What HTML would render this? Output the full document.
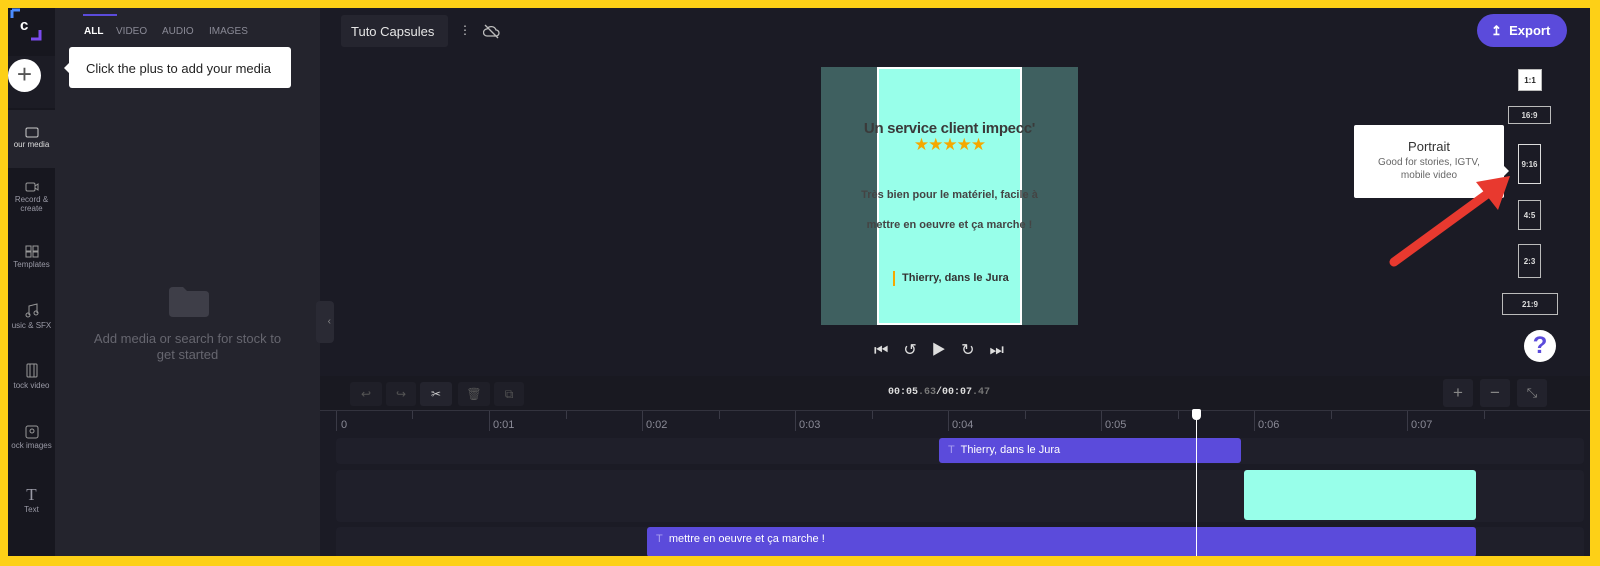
<!DOCTYPE html>
<html><head><meta charset="utf-8"><style>
*{margin:0;padding:0;box-sizing:border-box}
body{width:1600px;height:566px;background:#fdd017;font-family:"Liberation Sans",sans-serif;position:relative;overflow:hidden}
.a{position:absolute}
#app{left:8px;top:8px;width:1582px;height:548px;background:#1b1b25;overflow:hidden}
.nav{left:0;top:0;width:47px;height:548px;background:#17171f}
.navi{position:absolute;left:0;width:47px;text-align:center;color:#9a9aa6;font-size:8px;line-height:9px}
.panel{left:47px;top:0;width:265px;height:548px;background:#24242d}
.tab{position:absolute;top:18px;font-size:10px;color:#8a8a96}
.rb{position:absolute;border:1px solid #bbb;color:#ddd;font-size:8px;display:flex;align-items:center;justify-content:center;font-weight:bold}
.tick{position:absolute;top:0;width:1px;height:20px;background:#3a3a46}
.tl{position:absolute;top:8px;font-size:11px;color:#8a8a96}
.tk{position:absolute;border-radius:4px;background:#1f1f2a}
</style></head><body>
<div id="app" class="a">
 <div class="a nav">
  <div class="a" style="left:2px;top:0;width:34px;height:34px">
   <svg width="34" height="34"><path d="M2 2h8M2 2v8" stroke="#4b8cff" stroke-width="3" fill="none"/><path d="M30 22v9h-9" stroke="#7b4bef" stroke-width="3" fill="none"/><text x="10" y="22" font-size="15" font-weight="bold" fill="#fff" font-family="Liberation Sans">c</text></svg>
  </div>
  <div class="a" style="left:0;top:48px;width:47px;height:52px;background:#1c1c25"></div>
  <div class="a" style="left:0;top:51px;width:33px;height:33px;border-radius:50%;background:#fff;color:#555;font-size:26px;line-height:31px;text-align:center;font-weight:200">+</div>
  <div class="a" style="left:0;top:102px;width:47px;height:58px;background:#24242d"></div>
  <div class="navi" style="top:118px"><svg width="14" height="12"><rect x="1" y="2" width="12" height="9" rx="1.5" fill="none" stroke="#ccc"/></svg><br><span style="color:#ddd">our media</span></div>
  <div class="navi" style="top:173px"><svg width="14" height="12"><rect x="1" y="2" width="9" height="8" rx="1.5" fill="none" stroke="#999"/><path d="M10 5l3-2v6l-3-2" fill="none" stroke="#999"/></svg><br>Record &amp;<br>create</div>
  <div class="navi" style="top:236px"><svg width="14" height="14"><path d="M1 2h5v5H1zM1 8h5v5H1zM8 8h5v5H8zM8 2h5v5H8z" fill="none" stroke="#999"/></svg><br>Templates</div>
  <div class="navi" style="top:295px"><svg width="14" height="16"><path d="M4 12V3l8-2v9" fill="none" stroke="#999"/><circle cx="3" cy="12" r="2" fill="none" stroke="#999"/><circle cx="11" cy="10" r="2" fill="none" stroke="#999"/></svg><br>usic &amp; SFX</div>
  <div class="navi" style="top:355px"><svg width="14" height="16"><rect x="2" y="1" width="10" height="13" rx="1" fill="none" stroke="#999"/><path d="M5 1v13M9 1v13" stroke="#999"/></svg><br>tock video</div>
  <div class="navi" style="top:417px"><svg width="14" height="14"><rect x="1" y="1" width="12" height="12" rx="2" fill="none" stroke="#999"/><circle cx="7" cy="6" r="2" fill="none" stroke="#999"/></svg><br>ock images</div>
  <div class="navi" style="top:477px"><span style="font-family:'Liberation Serif';font-size:17px;line-height:20px">T</span><br>Text</div>
 </div>
 <div class="a panel">
  <div class="a" style="left:28px;top:6px;width:34px;height:2px;background:#5b4bdb"></div>
  <div class="tab" style="left:29px;color:#fff;font-weight:bold">ALL</div>
  <div class="tab" style="left:61px">VIDEO</div>
  <div class="tab" style="left:107px">AUDIO</div>
  <div class="tab" style="left:154px">IMAGES</div>
  <div class="a" style="left:14px;top:39px;width:222px;height:41px;background:#fff;border-radius:3px;font-size:13px;color:#222;padding:14px 0 0 17px">Click the plus to add your media</div>
  <div class="a" style="left:3px;top:54px;width:0;height:0;border:6px solid transparent;border-right-color:#fff"></div>
  <svg class="a" style="left:114px;top:279px" width="40" height="30"><path d="M0 4q0-4 4-4h10l4 4h18q4 0 4 4v18q0 4-4 4H4q-4 0-4-4z" fill="#3e3e48"/></svg>
  <div class="a" style="left:30px;top:323px;width:205px;text-align:center;color:#66666f;font-size:13px;line-height:16px">Add media or search for stock to get started</div>
 </div>
 <div class="a" style="left:308px;top:293px;width:18px;height:42px;background:#2a2a34;border-radius:4px;color:#888;font-size:10px;line-height:42px;text-align:right;padding-right:3px">‹</div>
 <div class="a" style="left:333px;top:7px;width:107px;height:32px;background:#25252f;border-radius:3px;color:#e6e6e6;font-size:13px;padding:9px 0 0 10px">Tuto Capsules</div>
 <div class="a" style="left:451px;top:15px;color:#ccc;font-size:12px">⋮</div>
 <svg class="a" style="left:475px;top:15px" width="17" height="17"><path d="M4 13h9a3 3 0 0 0 0-6 5 5 0 0 0-9-1 3.5 3.5 0 0 0 0 7" fill="none" stroke="#bbb" stroke-width="1.3"/><path d="M2 2l13 13" stroke="#bbb" stroke-width="1.3"/></svg>
 <div class="a" style="left:1469px;top:6px;width:90px;height:33px;background:#5b4bdb;border-radius:17px;color:#fff;font-size:13px;font-weight:bold;padding:9px 0 0 14px">↥&nbsp; Export</div>
 <!-- preview -->
 <div class="a" style="left:813px;top:59px;width:257px;height:258px;background:#3f6060"></div>
 <div class="a" style="left:869px;top:59px;width:145px;height:258px;background:#98ffea;border:2px solid #fff"></div>
 <div class="a" style="left:813px;top:112px;width:257px;text-align:center;font-size:15px;font-weight:bold;color:#3a3a3a;letter-spacing:-0.3px">Un service client impecc'</div>
 <div class="a" style="left:813px;top:127px;width:257px;text-align:center;font-size:17px;color:#f5a800;letter-spacing:-1px">★★★★★</div>
 <div class="a" style="left:813px;top:181px;width:257px;text-align:center;font-size:11px;font-weight:bold;color:#444">Très bien pour le matériel, facile à</div>
 <div class="a" style="left:813px;top:211px;width:257px;text-align:center;font-size:11px;font-weight:bold;color:#444">mettre en oeuvre et ça marche !</div>
 <div class="a" style="left:885px;top:263px;width:2px;height:15px;background:#f5a800"></div>
 <div class="a" style="left:894px;top:264px;font-size:11px;font-weight:bold;color:#333">Thierry, dans le Jura</div>
 <div class="a" style="left:866px;top:332px;color:#ddd;font-size:16px;letter-spacing:15px;white-space:nowrap">⏮↺▶↻⏭</div>
 <!-- ratios -->
 <div class="rb" style="left:1510px;top:61px;width:24px;height:22px;background:#fff;color:#222">1:1</div>
 <div class="rb" style="left:1500px;top:98px;width:43px;height:18px">16:9</div>
 <div class="rb" style="left:1510px;top:136px;width:23px;height:40px;border-color:#ddd">9:16</div>
 <div class="rb" style="left:1510px;top:192px;width:23px;height:30px">4:5</div>
 <div class="rb" style="left:1510px;top:236px;width:23px;height:34px">2:3</div>
 <div class="rb" style="left:1494px;top:285px;width:56px;height:22px">21:9</div>
 <div class="a" style="left:1516px;top:322px;width:32px;height:32px;border-radius:50%;background:#fff;color:#5b4bdb;font-size:24px;font-weight:bold;text-align:center;line-height:32px">?</div>
 <div class="a" style="left:1346px;top:117px;width:150px;height:73px;background:#fff;border-radius:2px;text-align:center">
  <div style="font-size:13px;color:#333;margin-top:14px">Portrait</div>
  <div style="font-size:10px;color:#666;line-height:13px;margin-top:2px">Good for stories, IGTV,<br>mobile video</div>
 </div>
 <div class="a" style="left:1496px;top:158px;border:5px solid transparent;border-left-color:#fff"></div>
 <svg class="a" style="left:1370px;top:150px" width="140" height="120"><path d="M16 104L112 34" stroke="#e8392f" stroke-width="9" stroke-linecap="round"/><path d="M132 18L98 24l22 28z" fill="#e8392f"/></svg>
 <!-- timeline -->
 <div class="a" style="left:312px;top:368px;width:1270px;height:34px;background:#191921"></div>
 <div class="a" style="left:342px;top:374px;width:400px;height:24px;color:#555;font-size:12px">
  <span class="a" style="left:0;width:32px;height:24px;background:#1f1f28;border-radius:3px;text-align:center;line-height:24px">↩</span>
  <span class="a" style="left:36px;width:30px;height:24px;background:#1f1f28;border-radius:3px;text-align:center;line-height:24px">↪</span>
  <span class="a" style="left:70px;width:32px;height:24px;background:#24242e;border-radius:3px;text-align:center;line-height:24px;color:#ccc">✂</span>
  <span class="a" style="left:108px;width:32px;height:24px;background:#1f1f28;border-radius:3px;text-align:center;line-height:24px">🗑</span>
  <span class="a" style="left:144px;width:30px;height:24px;background:#1f1f28;border-radius:3px;text-align:center;line-height:24px">⧉</span>
 </div>
 <div class="a" style="left:880px;top:379px;font-family:'Liberation Mono';font-size:10px;color:#ddd;font-weight:bold">00:05<span style="color:#777">.63</span>/00:07<span style="color:#777">.47</span></div>
 <div class="a" style="left:1435px;top:371px;width:30px;height:28px;background:#22222c;border-radius:3px;color:#888;text-align:center;line-height:28px;font-size:17px">+</div>
 <div class="a" style="left:1472px;top:371px;width:30px;height:28px;background:#22222c;border-radius:3px;color:#888;text-align:center;line-height:28px;font-size:17px">−</div>
 <div class="a" style="left:1509px;top:371px;width:30px;height:28px;background:#22222c;border-radius:3px;color:#888;text-align:center;line-height:28px;font-size:13px">⤡</div>
 <div class="a" style="left:312px;top:402px;width:1270px;height:1px;background:#33333e"></div>
 <div class="a" style="left:328px;top:403px;width:1254px;height:20px">
  <div class="tick" style="left:0"></div><div class="tl" style="left:5px">0</div>
  <div class="tick" style="left:76px;height:8px"></div>
  <div class="tick" style="left:153px"></div><div class="tl" style="left:157px">0:01</div>
  <div class="tick" style="left:230px;height:8px"></div>
  <div class="tick" style="left:306px"></div><div class="tl" style="left:310px">0:02</div>
  <div class="tick" style="left:383px;height:8px"></div>
  <div class="tick" style="left:459px"></div><div class="tl" style="left:463px">0:03</div>
  <div class="tick" style="left:536px;height:8px"></div>
  <div class="tick" style="left:612px"></div><div class="tl" style="left:616px">0:04</div>
  <div class="tick" style="left:689px;height:8px"></div>
  <div class="tick" style="left:765px"></div><div class="tl" style="left:769px">0:05</div>
  <div class="tick" style="left:842px;height:8px"></div>
  <div class="tick" style="left:918px"></div><div class="tl" style="left:922px">0:06</div>
  <div class="tick" style="left:995px;height:8px"></div>
  <div class="tick" style="left:1071px"></div><div class="tl" style="left:1075px">0:07</div>
  <div class="tick" style="left:1148px;height:8px"></div>
 </div>
 <div class="tk" style="left:328px;top:430px;width:1248px;height:26px"></div>
 <div class="tk" style="left:328px;top:462px;width:1248px;height:52px"></div>
 <div class="tk" style="left:328px;top:519px;width:1248px;height:40px"></div>
 <div class="a" style="left:931px;top:430px;width:302px;height:25px;background:#5b4bdb;border-radius:3px;color:#fff;font-size:11px;padding:6px 0 0 9px"><span style="color:#a99ff0">T</span>&nbsp; Thierry, dans le Jura</div>
 <div class="a" style="left:1236px;top:462px;width:232px;height:50px;background:#98ffea;border-radius:3px"></div>
 <div class="a" style="left:639px;top:519px;width:829px;height:30px;background:#5b4bdb;border-radius:3px;color:#fff;font-size:11px;padding:6px 0 0 9px"><span style="color:#a99ff0">T</span>&nbsp; mettre en oeuvre et ça marche !</div>
 <div class="a" style="left:1188px;top:403px;width:1px;height:150px;background:#fff"></div>
 <div class="a" style="left:1184px;top:401px;width:9px;height:11px;background:#fff;border-radius:2px 2px 4px 4px"></div>
</div>
</body></html>
